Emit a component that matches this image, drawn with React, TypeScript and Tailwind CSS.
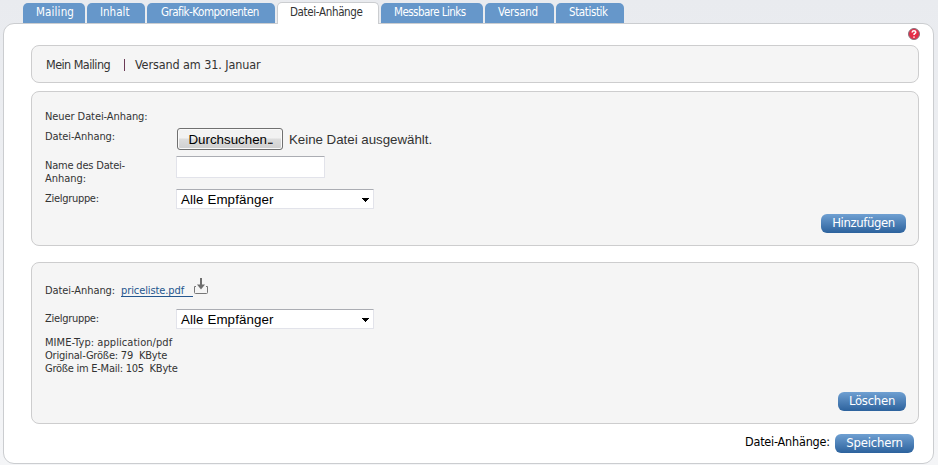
import React from "react";

const ui = "font-['DejaVu_Sans_Condensed','DejaVu_Sans',sans-serif] [font-stretch:condensed]";

const tabs = [
  { label: "Mailing", box: "w-[62px] pl-[13px]", track: "tracking-[0.15px]" },
  { label: "Inhalt", box: "w-[58px] pl-[13px]", track: "tracking-[0px]" },
  { label: "Grafik-Komponenten", box: "w-[128px] pl-[14px]", track: "tracking-[-0.5px]" },
  { label: "Datei-Anhänge", active: true, box: "w-[102px] pl-[12px]", track: "tracking-[-0.35px]" },
  { label: "Messbare Links", box: "w-[102px] pl-[13px]", track: "tracking-[-0.55px]" },
  { label: "Versand", box: "w-[69px] pl-[13px]", track: "tracking-[-0.25px]" },
  { label: "Statistik", box: "w-[68px] pl-[13px]", track: "tracking-[-0.4px]" },
];

function Card({ className, children }: { className: string; children: React.ReactNode }) {
  return (
    <section className={`w-[888px] rounded-[8px] border border-[#cdcdce] bg-[#f5f5f5] ${className}`}>
      {children}
    </section>
  );
}

function Action({ className, children }: { className: string; children: React.ReactNode }) {
  return (
    <button
      className={`block h-[19px] shrink-0 rounded-[6px] bg-linear-to-b from-[#6fa0d2] to-[#2c629d] pb-[2px] text-center text-[13px] leading-[17px] whitespace-nowrap text-white ${className}`}
    >
      {children}
    </button>
  );
}

function Select() {
  return (
    <div className="flex h-[20px] w-[198px] items-center justify-between rounded-[1px] border border-[#e2e3ea] border-t-[#abadb3] bg-white pr-[4px] pl-[4px] font-['Liberation_Sans',sans-serif] text-[13.33px] leading-[18px] text-black">
      <span className="pt-[2px] tracking-[0.1px]">Alle Empfänger</span>
      <svg className="mt-[2px]" width="7" height="4" viewBox="0 0 7 4" shapeRendering="crispEdges">
        <path d="M0 0h7v1H6v1H5v1H4v1H3V3H2V2H1V1H0z" fill="#000" />
      </svg>
    </div>
  );
}

function Help() {
  return (
    <svg width="12" height="12" viewBox="0 0 12 12">
      <circle cx="6" cy="6" r="5.5" fill="#e52e48" stroke="#84757f" />
      <path d="M4.2 4.6V4Q4.4 2.7 6 2.7T7.8 4.1Q7.8 5 6.8 5.5Q6 5.9 6 7M6 8.4v1.3" fill="none" stroke="#fff" strokeWidth="1.5" />
    </svg>
  );
}

function Download() {
  return (
    <svg className="ml-px" width="14" height="16" viewBox="0 0 14 16">
      <path d="M7 0v9" stroke="#6e6e6e" strokeWidth="2" />
      <path d="M3 6.5h8L7 11.5z" fill="#6e6e6e" />
      <path d="M2 8.5H.5v6q0 1 1 1h11q1 0 1-1v-6H12" fill="none" stroke="#777" strokeWidth="1" />
    </svg>
  );
}

export default function App() {
  return (
    <div className={`h-[465px] w-[938px] overflow-hidden bg-linear-to-b from-[#e9ebef] to-[#f4f5f7] ${ui} text-[11px] leading-[13px] text-[#333]`}>
      <nav className="flex h-[23px] items-end gap-[2px] pl-[23px] text-[11.5px]">
        {tabs.map((t) =>
          t.active ? (
            <div key={t.label} className={`relative z-10 -mb-px h-[22px] rounded-t-[5px] border border-b-0 border-[#cbcdd0] bg-white pt-[2px] whitespace-nowrap text-[#333] ${t.box} leading-[15px] ${t.track}`}>
              {t.label}
            </div>
          ) : (
            <div key={t.label} className={`h-[20px] rounded-t-[5px] bg-[#6697ca] pt-[2px] leading-[15px] whitespace-nowrap text-white ${t.box} ${t.track}`}>
              {t.label}
            </div>
          ),
        )}
      </nav>
      <main className="ml-[3px] h-[441px] w-[931px] rounded-[11px] border border-[#cbcdd0] bg-white pl-[27px]">
        <div className="flex h-[21px] w-[889px] justify-end pt-[4px]">
          <Help />
        </div>
        <Card className="flex h-[38px] items-center pl-[14px] text-[12.5px] leading-[15px]">
          <span className="w-[78px] tracking-[-0.55px]">Mein Mailing</span>
          <span className="mt-[2px] mr-[10px] h-[12px] w-px bg-[#6b3a55]" />
          <span className="tracking-[-0.1px]">Versand am 31. Januar</span>
        </Card>
        <Card className="mt-[8px] h-[155px] pt-[18px] pr-[12px] pl-[13px]">
          <div className="tracking-[-0.08px]">Neuer Datei-Anhang:</div>
          <div className="mt-[5px] flex h-[28px]">
            <div className="w-[132px] pt-[2px] tracking-[-0.07px]">Datei-Anhang:</div>
            <button className="h-[22px] w-[106px] rounded-[3px] border border-[#707070] bg-linear-to-b from-[#f2f2f2] from-45% via-[#dddddd] via-50% to-[#cfcfcf] text-center font-['Liberation_Sans',sans-serif] text-[13.33px] leading-[19px] whitespace-nowrap text-black shadow-[inset_0_0_0_1px_#fafafa]">
              Durchsuchen<span className="tracking-[-2.2px]">...</span>
            </button>
            <span className="ml-[6px] pt-px font-['Liberation_Sans',sans-serif] text-[13.33px] leading-[22px] tracking-[-0.03px]">
              Keine Datei ausgewählt.
            </span>
          </div>
          <div className="flex h-[33px]">
            <div className="w-[131px] pt-[3px] tracking-[-0.2px]">
              Name des Datei-
              <br />
              <span className="tracking-[-0.02px]">Anhang:</span>
            </div>
            <input className="h-[22px] w-[149px] rounded-[1px] border border-[#e2e3ea] border-t-[#abadb3] bg-white" />
          </div>
          <div className="flex h-[25px]">
            <div className="w-[131px] pt-[3px] tracking-[-0.3px]">Zielgruppe:</div>
            <Select />
          </div>
          <div className="flex justify-end">
            <Action className="w-[85px]">
              <span className="tracking-[-0.4px]">Hinzufügen</span>
            </Action>
          </div>
        </Card>
        <Card className="mt-[16px] h-[162px] pt-[15px] pr-[12px] pl-[13px]">
          <div className="flex h-[31px]">
            <span className="w-[76px] pt-[6px] tracking-[-0.07px]">Datei-Anhang:</span>
            <a className="mt-[6px] h-[13px] w-[72px] border-b border-[#24568e] tracking-[-0.1px] text-[#24568e]">priceliste.pdf</a>
            <Download />
          </div>
          <div className="flex h-[27px]">
            <div className="w-[131px] pt-[3px] tracking-[-0.3px]">Zielgruppe:</div>
            <Select />
          </div>
          <div className="h-[56px] whitespace-pre">
            <div className="tracking-[0.06px]">MIME-Typ: application/pdf</div>
            <div className="tracking-[-0.2px]">Original-Größe: 79  KByte</div>
            <div className="tracking-[-0.25px]">Größe im E-Mail: 105  KByte</div>
          </div>
          <div className="flex justify-end">
            <Action className="w-[68px]">
              <span className="tracking-[-0.25px]">Löschen</span>
            </Action>
          </div>
        </Card>
        <div className="mt-[10px] flex w-[883px] justify-end">
          <span className="w-[90px] text-[12.5px] leading-[15px] tracking-[-0.2px] whitespace-nowrap text-black">Datei-Anhänge:</span>
          <Action className="w-[79px]">
            <span className="tracking-[-0.2px]">Speichern</span>
          </Action>
        </div>
      </main>
    </div>
  );
}
